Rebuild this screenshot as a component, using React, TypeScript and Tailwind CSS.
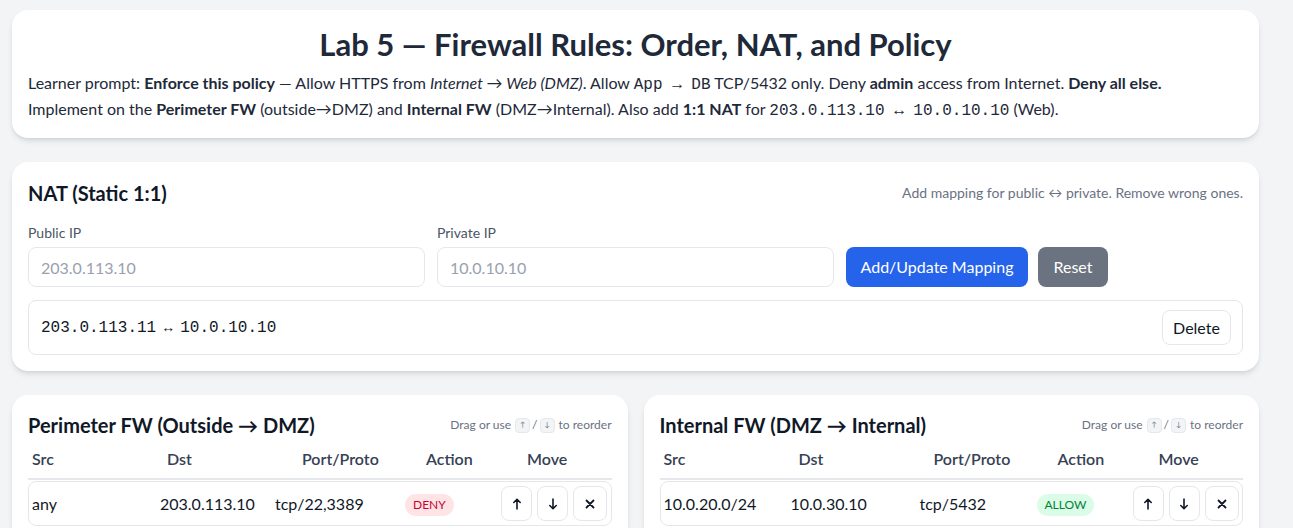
import React from "react";

const Kbd = ({ children }: { children: React.ReactNode }) => (
  <span className="inline-flex items-center justify-center w-[15px] h-[15px] rounded border border-gray-200 bg-gray-100 text-[7px] text-gray-500 align-middle">
    {children}
  </span>
);

const MoveBtns = () => (
  <div className="flex items-center gap-[5px]">
    <button className="w-[31px] h-[35px] rounded-lg border border-gray-200 bg-white flex items-center justify-center text-gray-900">
      <svg width="10" height="12" viewBox="0 0 10 12" fill="none" stroke="currentColor" strokeWidth="1.6" strokeLinecap="round" strokeLinejoin="round"><path d="M5 11V1.5M1.8 4.5L5 1.3l3.2 3.2" /></svg>
    </button>
    <button className="w-[31px] h-[35px] rounded-lg border border-gray-200 bg-white flex items-center justify-center text-gray-900">
      <svg width="10" height="12" viewBox="0 0 10 12" fill="none" stroke="currentColor" strokeWidth="1.6" strokeLinecap="round" strokeLinejoin="round"><path d="M5 1v9.5M1.8 7.5L5 10.7l3.2-3.2" /></svg>
    </button>
    <button className="w-[34px] h-[35px] rounded-lg border border-gray-200 bg-white flex items-center justify-center text-gray-900">
      <svg width="10" height="10" viewBox="0 0 10 10" fill="none" stroke="currentColor" strokeWidth="1.8" strokeLinecap="round"><path d="M1.5 1.5l7 7M8.5 1.5l-7 7" /></svg>
    </button>
  </div>
);

const FwCard = ({
  title,
  rowCols,
  row,
  allow,
}: {
  title: string;
  rowCols: string;
  row: string[];
  allow: boolean;
}) => (
  <div className="bg-white rounded-2xl shadow-md px-4 pt-4 pb-4">
    <div className="flex items-center justify-between">
      <h2 className="text-xl font-bold text-gray-900">{title}</h2>
      <div className="text-xs text-gray-500 flex items-center gap-[2px]">
        <span className="mr-[2px]">Drag or use</span>
        <Kbd>↑</Kbd>
        <span>/</span>
        <Kbd>↓</Kbd>
        <span className="ml-[2px]">to reorder</span>
      </div>
    </div>
    <div className="mt-2 grid grid-cols-[135px_135px_124px_101px_1fr] px-1 pb-[7px] border-b-2 border-gray-200 font-semibold text-gray-700 text-base">
      <div>Src</div>
      <div>Dst</div>
      <div>Port/Proto</div>
      <div>Action</div>
      <div>Move</div>
    </div>
    <div className={"mt-[1px] grid items-center rounded-lg border border-gray-200 py-[4px] pl-[3px] pr-[4px] text-base text-gray-900 " + rowCols}>
      <div>{row[0]}</div>
      <div>{row[1]}</div>
      <div>{row[2]}</div>
      <div>
        {allow ? (
          <span className="inline-block rounded-full bg-green-100 text-green-700 text-xs px-2 py-[3px]">ALLOW</span>
        ) : (
          <span className="inline-block rounded-full bg-rose-100 text-rose-700 text-xs px-2 py-[3px]">DENY</span>
        )}
      </div>
      <div className="flex justify-end">
        <MoveBtns />
      </div>
    </div>
  </div>
);

export default function App() {
  return (
    <div className="min-h-screen bg-gray-100 px-3 pt-[10px] pb-6" style={{ fontFamily: "Lato, 'Noto Sans', sans-serif" }}>
      <div className="w-[1247px] flex flex-col gap-6">
        <div className="bg-white rounded-2xl shadow-md p-4">
          <h1 className="text-[31px] leading-9 font-bold text-gray-800 text-center">Lab 5 — Firewall Rules: Order, NAT, and Policy</h1>
          <p className="mt-2 text-base leading-[26px] text-gray-800">
            Learner prompt: <b>Enforce this policy</b> — Allow HTTPS from <i>Internet → Web (DMZ)</i>. Allow{" "}
            <code className="font-mono text-base leading-none">App → DB</code> TCP/5432 only. Deny <b>admin</b> access from Internet. <b>Deny all else.</b>
            <br />
            Implement on the <b>Perimeter FW</b> (outside→DMZ) and <b>Internal FW</b> (DMZ→Internal). Also add <b>1:1 NAT</b> for{" "}
            <code className="font-mono leading-none">203.0.113.10 ↔ 10.0.10.10</code> (Web).
          </p>
        </div>

        <div className="bg-white rounded-2xl shadow-md p-4">
          <div className="flex items-center justify-between pt-[1px]">
            <h2 className="text-xl font-bold text-gray-900">NAT (Static 1:1)</h2>
            <span className="text-sm text-gray-500">Add mapping for public ↔ private. Remove wrong ones.</span>
          </div>
          <div className="mt-4 flex items-end">
            <label className="w-[397px] flex flex-col gap-1">
              <span className="text-sm text-gray-600">Public IP</span>
              <input className="h-10 rounded-lg border border-gray-200 px-3 text-base placeholder:text-gray-400 outline-none" placeholder="203.0.113.10" />
            </label>
            <label className="ml-3 w-[397px] flex flex-col gap-1">
              <span className="text-sm text-gray-600">Private IP</span>
              <input className="h-10 rounded-lg border border-gray-200 px-3 text-base placeholder:text-gray-400 outline-none" placeholder="10.0.10.10" />
            </label>
            <div className="ml-3 flex gap-[10px]">
              <button className="h-10 w-[182px] rounded-lg bg-[#2563eb] text-white text-base">Add/Update Mapping</button>
              <button className="h-10 w-[70px] rounded-lg bg-[#6b7280] text-white text-base">Reset</button>
            </div>
          </div>
          <div className="mt-[13px] flex items-center justify-between rounded-lg border border-gray-200 pl-3 pr-[11px] py-[9px]">
            <span className="font-mono text-base text-gray-900">
              203.0.113.11<span className="font-sans text-sm mx-[5px]">↔</span>10.0.10.10
            </span>
            <button className="h-[35px] w-[69px] rounded-lg border border-gray-200 bg-white text-base text-gray-900">Delete</button>
          </div>
        </div>

        <div className="grid grid-cols-2 gap-4">
          <FwCard
            title="Perimeter FW (Outside → DMZ)"
            rowCols="grid-cols-[128px_115px_130px_96px_1fr]"
            row={["any", "203.0.113.10", "tcp/22,3389"]}
            allow={false}
          />
          <FwCard
            title="Internal FW (DMZ → Internal)"
            rowCols="grid-cols-[127px_129px_117px_96px_1fr]"
            row={["10.0.20.0/24", "10.0.30.10", "tcp/5432"]}
            allow={true}
          />
        </div>
      </div>
    </div>
  );
}
